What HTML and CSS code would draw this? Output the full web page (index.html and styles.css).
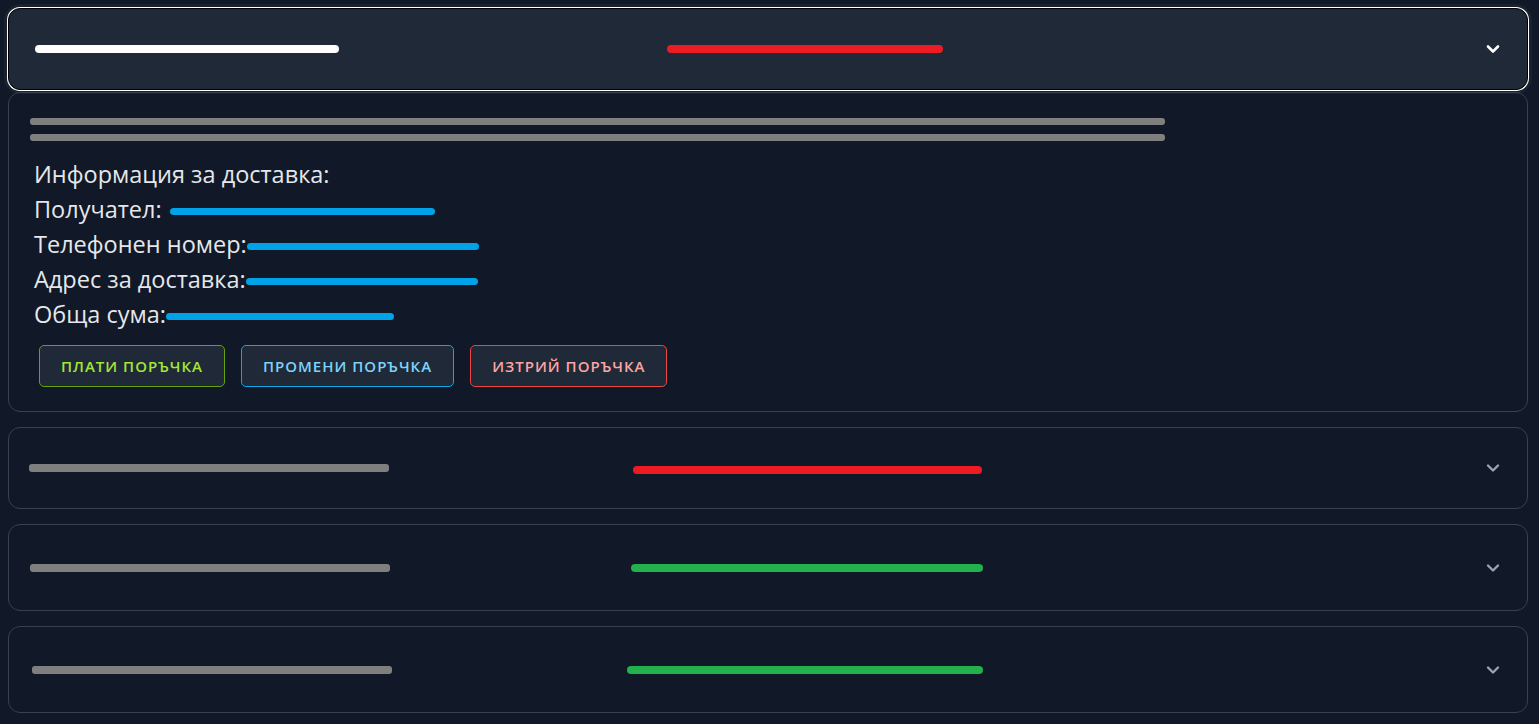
FILE: index.html
```html
<!DOCTYPE html>
<html lang="bg">
<head>
<meta charset="utf-8">
<title>Поръчки</title>
<link rel="stylesheet" href="styles.css">
</head>
<body>
<div class="orders">
  <div class="order order-open">
    <div class="order-head">
      <span class="bar bar-white" style="width:304px"></span>
      <span class="bar bar-red head-status" style="width:276px"></span>
      <svg class="chev chev-light" viewBox="0 0 14 10" width="14" height="10"><path d="M2 2.5 L7 7.5 L12 2.5"/></svg>
    </div>
    <div class="order-body">
      <span class="bar bar-gray bar-long"></span>
      <span class="bar bar-gray bar-long"></span>
      <div class="info">
        <div class="line">Информация за доставка:</div>
        <div class="line">Получател: <span class="bar bar-blue" style="width:265px;margin-left:8px"></span></div>
        <div class="line">Телефонен номер:<span class="bar bar-blue" style="width:232px"></span></div>
        <div class="line">Адрес за доставка:<span class="bar bar-blue" style="width:232px"></span></div>
        <div class="line">Обща сума:<span class="bar bar-blue" style="width:228px"></span></div>
      </div>
      <div class="actions">
        <button class="btn btn-pay">Плати поръчка</button>
        <button class="btn btn-edit">Промени поръчка</button>
        <button class="btn btn-del">Изтрий поръчка</button>
      </div>
    </div>
  </div>

  <div class="order order-closed">
    <span class="bar bar-gray" style="width:360px;margin-left:20px"></span>
    <span class="bar bar-red closed-status" style="width:349px;margin-left:244px;margin-top:4px"></span>
    <svg class="chev" viewBox="0 0 14 10" width="14" height="10"><path d="M2 2.5 L7 7.5 L12 2.5"/></svg>
  </div>

  <div class="order order-closed order-tall">
    <span class="bar bar-gray" style="width:360px;margin-left:21px"></span>
    <span class="bar bar-green closed-status" style="width:352px;margin-left:241px"></span>
    <svg class="chev" viewBox="0 0 14 10" width="14" height="10"><path d="M2 2.5 L7 7.5 L12 2.5"/></svg>
  </div>

  <div class="order order-closed order-tall">
    <span class="bar bar-gray" style="width:360px;margin-left:23px"></span>
    <span class="bar bar-green closed-status" style="width:356px;margin-left:235px"></span>
    <svg class="chev" viewBox="0 0 14 10" width="14" height="10"><path d="M2 2.5 L7 7.5 L12 2.5"/></svg>
  </div>
</div>
</body>
</html>
```

FILE: styles.css
```css
* { box-sizing: border-box; }
html, body {
  margin: 0;
  background: #111827;
}
body {
  font-family: "Open Sans", "Noto Sans", sans-serif;
  color: #e5e7eb;
}
.orders {
  padding: 8px 11px 0 8px;
  display: flex;
  flex-direction: column;
  gap: 15px;
}
.bar {
  display: inline-block;
  height: 8px;
  border-radius: 4px;
  flex: none;
}
.bar-white { background: #ffffff; }
.bar-red { background: #ed1c24; }
.bar-green { background: #22b14c; }
.bar-gray { background: #7f7f7f; border-radius: 3px; }
.bar-blue { background: #00a2e8; height: 7px; }

.order-open {
  display: flex;
  flex-direction: column;
  gap: 2px;
}
.order-head {
  height: 82px;
  background: #1f2937;
  border: 1px solid #000;
  border-radius: 12px;
  box-shadow: 0 0 0 1px #fff, 0 0 0 4px rgba(31, 41, 55, 0.6);
  display: flex;
  align-items: center;
  padding: 0 27px 0 26px;
}
.head-status { margin-left: 328px; }
.chev {
  margin-left: auto;
  fill: none;
  stroke: #9ca3af;
  stroke-width: 2.4;
  stroke-linecap: round;
  stroke-linejoin: round;
}
.chev-light { stroke: #ffffff; stroke-width: 2.6; }

.order-body {
  border: 1px solid #374151;
  border-radius: 12px;
  padding: 25px 20px 24px 21px;
  display: flex;
  flex-direction: column;
}
.bar-long { width: 1135px; height: 7px; margin-bottom: 9px; }
.bar-long + .bar-long { margin-bottom: 0; }
.info {
  margin-top: 16px;
  padding-left: 4px;
  font-size: 23.5px;
  line-height: 35px;
}
.line {
  display: flex;
  align-items: center;
  white-space: nowrap;
}
.line .bar { margin-top: 3px; }
.actions {
  display: flex;
  gap: 16px;
  margin-top: 13px;
  padding-left: 9px;
}
.btn {
  height: 42px;
  padding: 0 21px;
  background: #1f2937;
  border: 1px solid;
  border-radius: 5px;
  font-family: "Open Sans", "Noto Sans", sans-serif;
  font-size: 15px;
  font-weight: 600;
  letter-spacing: 1px;
  text-transform: uppercase;
}
.btn-pay { border-color: #65a30d; color: #a3e635; }
.btn-edit { border-color: #0ea5e9; color: #7dd3fc; }
.btn-del { border-color: #ef4444; color: #fca5a5; }

.order-closed {
  height: 82px;
  border: 1px solid #374151;
  border-radius: 12px;
  display: flex;
  align-items: center;
  padding: 0 27px 0 0;
}
.order-tall { height: 87px; }
```
